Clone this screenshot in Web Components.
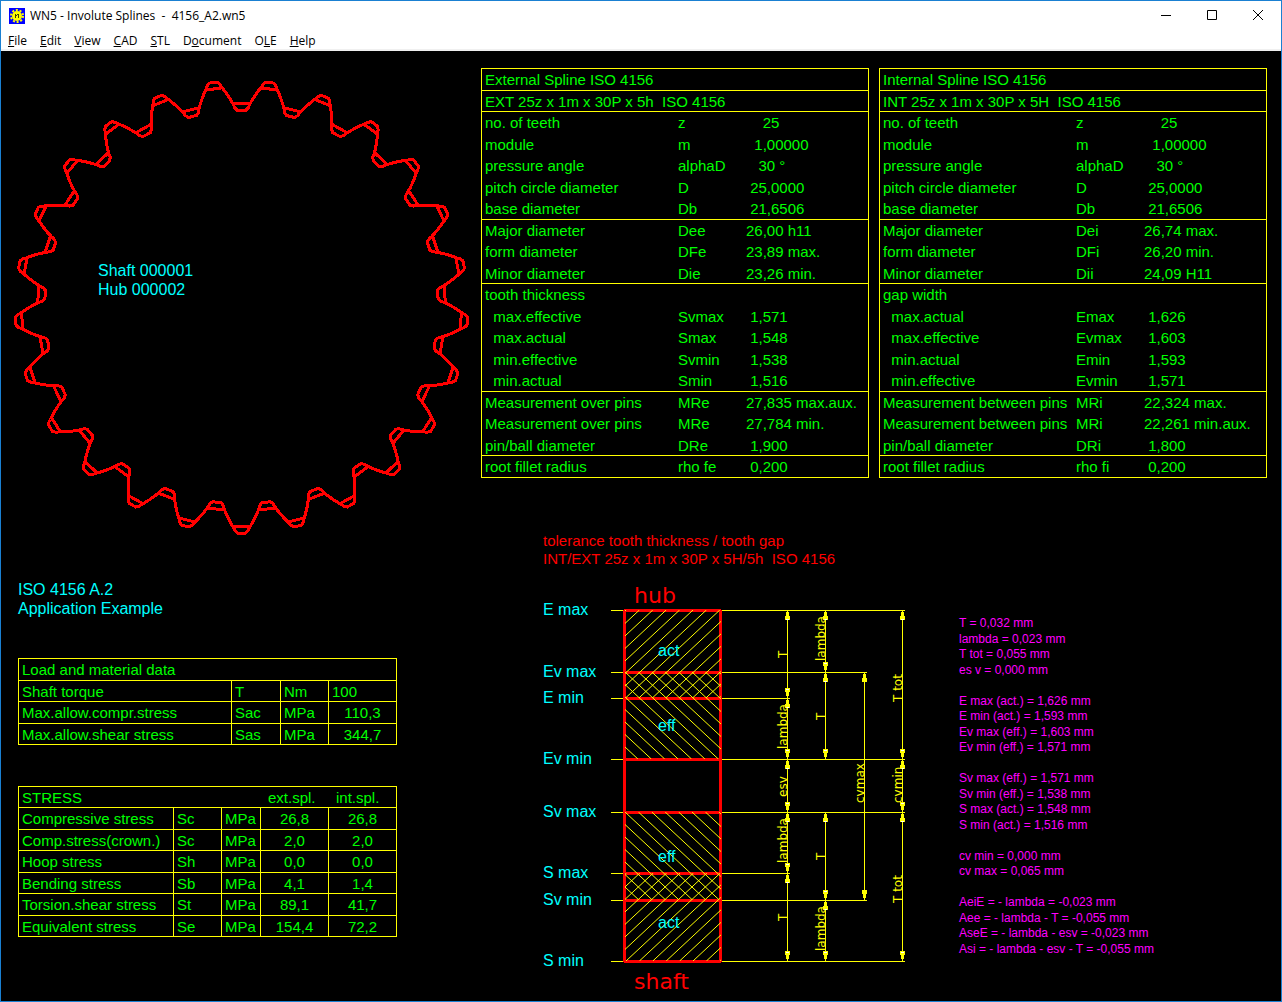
<!DOCTYPE html>
<html lang="en">
<head>
<meta charset="utf-8">
<title>WN5 - Involute Splines - 4156_A2.wn5</title>
<meta name="viewport" content="width=device-width, initial-scale=1">
<style>
  body {
    margin: 0;
    background: #000000;
    font-family: "Liberation Sans", Arial, sans-serif;
  }
</style>
</head>
<body>
<app-window>
  <title-bar slot="title">WN5 - Involute Splines&nbsp; -&nbsp; 4156_A2.wn5</title-bar>
  <menu-bar slot="menu">
    <menu-item><u>F</u>ile</menu-item>
    <menu-item><u>E</u>dit</menu-item>
    <menu-item><u>V</u>iew</menu-item>
    <menu-item><u>C</u>AD</menu-item>
    <menu-item><u>S</u>TL</menu-item>
    <menu-item>D<u>o</u>cument</menu-item>
    <menu-item>O<u>L</u>E</menu-item>
    <menu-item><u>H</u>elp</menu-item>
  </menu-bar>
  <spline-drawing slot="left">Shaft 000001<br>Hub 000002</spline-drawing>
  <part-note slot="left">ISO 4156 A.2<br>Application Example</part-note>
  <load-table slot="left"></load-table>
  <stress-table slot="left"></stress-table>
  <spline-table slot="tables" side="ext"></spline-table>
  <spline-table slot="tables" side="int"></spline-table>
  <tolerance-diagram slot="tolerance">
    <span slot="line1">tolerance tooth thickness / tooth gap</span>
    <span slot="line2">INT/EXT 25z x 1m x 30P x 5H/5h&nbsp; ISO 4156</span>
  </tolerance-diagram>
  <value-list slot="tolerance"></value-list>
</app-window>

<script>
class AppWindow extends HTMLElement {
  connectedCallback() {
    this.attachShadow({ mode: 'open' });
    this.shadowRoot.innerHTML = `
      <style>
        :host {
          display: flex;
          flex-direction: column;
          box-sizing: border-box;
          min-height: 100vh;
          border: 1px solid #1a80d2;
          background: #000000;
        }
        main {
          flex: 1;
          display: grid;
          grid-template-columns: 480px minmax(0, 1fr);
        }
        .left {
          display: flex;
          flex-direction: column;
        }
        .right {
          padding: 17px 14px 0 0;
        }
        .tables {
          display: grid;
          grid-template-columns: 1fr 1fr;
          gap: 10px;
        }
        .tolerance {
          display: flex;
          align-items: flex-start;
          gap: 44px;
          padding: 54px 0 0 62px;
        }
      </style>
      <slot name="title"></slot>
      <slot name="menu"></slot>
      <main>
        <div class="left"><slot name="left"></slot></div>
        <div class="right">
          <div class="tables"><slot name="tables"></slot></div>
          <div class="tolerance"><slot name="tolerance"></slot></div>
        </div>
      </main>
    `;
  }
}
customElements.define('app-window', AppWindow);

class TitleBar extends HTMLElement {
  connectedCallback() {
    this.attachShadow({ mode: 'open' });
    this.shadowRoot.innerHTML = `
      <style>
        :host {
          display: flex;
          align-items: center;
          height: 30px;
          padding-left: 8px;
          background: #ffffff;
          color: #000000;
          font: 12px/16px "Open Sans", "Noto Sans", sans-serif;
        }
        h1 {
          flex: 1;
          margin: 0 0 0 5px;
          font: inherit;
        }
        button {
          align-self: flex-start;
          width: 46px;
          height: 28px;
          padding: 0;
          border: 0;
          background: none;
        }
        button:hover { background: #e5e5e5; }
        button svg { display: block; margin: 0 auto; }
      </style>
      <svg width="16" height="16" viewBox="0 0 16 16" aria-hidden="true">
        <rect width="16" height="16" fill="#0000ff"/>
        <circle cx="8" cy="8" r="6" fill="none" stroke="#ffff00" stroke-width="2" stroke-dasharray="2 1.77"/>
        <circle cx="8" cy="8" r="5" fill="#ffff00"/>
        <path d="M6 6h1v4h-1zM7 7h1v1h-1zM8 6h2v1h-2zM9 7h1v3h-1z" fill="#404000"/>
      </svg>
      <h1><slot></slot></h1>
      <button aria-label="Minimize"><svg width="10" height="10"><path d="M0 5.5h10" stroke="#000"/></svg></button>
      <button aria-label="Maximize"><svg width="10" height="10"><path d="M.5 .5h9v9h-9z" fill="none" stroke="#000"/></svg></button>
      <button aria-label="Close"><svg width="10" height="10"><path d="M0 0l10 10M10 0L0 10" stroke="#000"/></svg></button>
    `;
  }
}
customElements.define('title-bar', TitleBar);

class MenuBar extends HTMLElement {
  connectedCallback() {
    this.attachShadow({ mode: 'open' });
    this.shadowRoot.innerHTML = `
      <style>
        :host {
          display: block;
          background: #ffffff;
          border-bottom: 2px solid #f0f0f0;
        }
        nav {
          display: flex;
          gap: 1px;
          height: 18px;
          padding-left: 1px;
        }
      </style>
      <nav><slot></slot></nav>
    `;
  }
}
customElements.define('menu-bar', MenuBar);

class MenuItem extends HTMLElement {
  connectedCallback() {
    this.attachShadow({ mode: 'open' });
    this.shadowRoot.innerHTML = `
      <style>
        :host { display: block; }
        button {
          height: 18px;
          padding: 0 6px;
          border: 0;
          background: none;
          color: #000000;
          font: 12px/18px "Open Sans", "Noto Sans", sans-serif;
        }
        button:hover { background: #cce8ff; }
      </style>
      <button><slot></slot></button>
    `;
  }
}
customElements.define('menu-item', MenuItem);

// Profile of the external and internal spline, 25 teeth, 30 degrees
const SPLINE = { z: 25, pitch: 25, base: 21.6506, px: 16.92, cx: 240.5, cy: 256 };

function splinePath(tipD, formTip, formRoot, rootD) {
  const { z, pitch, base, px, cx, cy } = SPLINE;
  const inv = d => {
    const a = Math.acos(base / d);
    return Math.tan(a) - a;
  };
  const half = d => Math.PI / 2 / z + inv(pitch) - inv(d);
  // half a tooth as [diameter, angle from the tooth centre]
  const side = [];
  if (tipD > formTip) {
    side.push([tipD, half(formTip) * 0.5], [(tipD + formTip) / 2, half(formTip) * 0.85]);
  }
  for (let i = 0; i <= 6; i++) {
    const d = formTip + (formRoot - formTip) * i / 6;
    side.push([d, half(d)]);
  }
  if (rootD < formRoot) {
    const gap = Math.PI / z - half(formRoot);
    side.push([(rootD + formRoot) / 2, Math.PI / z - gap * 0.88], [rootD, Math.PI / z - gap * 0.55]);
  }
  const pts = [];
  for (let k = 0; k < z; k++) {
    const mid = Math.PI / 2 + k * 2 * Math.PI / z;
    const tooth = side.slice().reverse().map(([d, a]) => [d, -a]).concat(side);
    for (const [d, a] of tooth) {
      const r = d / 2 * px;
      pts.push((cx + r * Math.cos(mid + a)).toFixed(1) + ' ' + (cy + r * Math.sin(mid + a)).toFixed(1));
    }
  }
  return 'M' + pts.join('L') + 'Z';
}

class SplineDrawing extends HTMLElement {
  connectedCallback() {
    this.attachShadow({ mode: 'open' });
    this.shadowRoot.innerHTML = `
      <style>
        :host {
          display: block;
          position: relative;
          height: 500px;
        }
        svg { display: block; }
        path {
          fill: none;
          stroke: #ff0000;
          stroke-width: 3;
          shape-rendering: crispEdges;
        }
        p {
          position: absolute;
          left: 97px;
          top: 210px;
          margin: 0;
          color: #00ffff;
          font-size: 16px;
          line-height: 19px;
        }
      </style>
      <svg width="480" height="500" viewBox="0 0 480 500" role="img" aria-label="Spline profile">
        <path d="${splinePath(26, 26, 23.89, 23.26)}"/>
        <path d="${splinePath(26.74, 26.2, 24.09, 24.09)}"/>
      </svg>
      <p><slot></slot></p>
    `;
  }
}
customElements.define('spline-drawing', SplineDrawing);

class PartNote extends HTMLElement {
  connectedCallback() {
    this.attachShadow({ mode: 'open' });
    this.shadowRoot.innerHTML = `
      <style>
        :host {
          display: block;
          margin: 29px 0 40px 17px;
          color: #00ffff;
          font-size: 16px;
          line-height: 19px;
        }
      </style>
      <slot></slot>
    `;
  }
}
customElements.define('part-note', PartNote);

const TABLE_STYLE = `
  table {
    width: 100%;
    table-layout: fixed;
    border-collapse: separate;
    border-spacing: 0;
    border: 1px solid #ffff00;
    border-top: 0;
    color: #00ff00;
    font-size: 15px;
    line-height: 18px;
  }
  th, td {
    box-sizing: border-box;
    height: 21px;
    padding: 2px 0 0 3px;
    border-top: 1px solid transparent;
    font-weight: normal;
    text-align: left;
    vertical-align: top;
    white-space: pre;
  }
`;

const GRID_STYLE = `
  :host {
    display: block;
    margin: 0 84px 41px 17px;
  }
  th, td { border-top-color: #ffff00; }
  td + td {
    border-left: 1px solid #ffff00;
  }
  .num { text-align: center; padding-left: 0; }
`;

class LoadTable extends HTMLElement {
  connectedCallback() {
    const rows = [
      ['Shaft torque', 'T', 'Nm', '100'],
      ['Max.allow.compr.stress', 'Sac', 'MPa', '110,3'],
      ['Max.allow.shear stress', 'Sas', 'MPa', '344,7']
    ];
    this.attachShadow({ mode: 'open' });
    this.shadowRoot.innerHTML = `
      <style>
        ${TABLE_STYLE}
        ${GRID_STYLE}
        tr:nth-child(odd) > * { height: 22px; }
      </style>
      <table>
        <colgroup><col><col style="width:49px"><col style="width:48px"><col style="width:68px"></colgroup>
        <tr><th colspan="4">Load and material data</th></tr>
        ${rows.map((r, i) => `<tr>${r.map((c, j) =>
          `<td${j === 3 && i > 0 ? ' class="num"' : ''}>${c}</td>`).join('')}</tr>`).join('')}
      </table>
    `;
  }
}
customElements.define('load-table', LoadTable);

class StressTable extends HTMLElement {
  connectedCallback() {
    const rows = [
      ['Compressive stress', 'Sc', 'MPa', '26,8', '26,8'],
      ['Comp.stress(crown.)', 'Sc', 'MPa', '2,0', '2,0'],
      ['Hoop stress', 'Sh', 'MPa', '0,0', '0,0'],
      ['Bending stress', 'Sb', 'MPa', '4,1', '1,4'],
      ['Torsion.shear stress', 'St', 'MPa', '89,1', '41,7'],
      ['Equivalent stress', 'Se', 'MPa', '154,4', '72,2']
    ];
    this.attachShadow({ mode: 'open' });
    this.shadowRoot.innerHTML = `
      <style>
        ${TABLE_STYLE}
        ${GRID_STYLE}
        tr:nth-child(even) > * { height: 22px; }
        .spl { padding-left: 8px; }
      </style>
      <table>
        <colgroup><col><col style="width:48px"><col style="width:39px"><col style="width:68px"><col style="width:68px"></colgroup>
        <tr><th colspan="3">STRESS</th><th class="spl">ext.spl.</th><th class="spl">int.spl.</th></tr>
        ${rows.map(r => `<tr>${r.map((c, j) =>
          `<td${j > 2 ? ' class="num"' : ''}>${c}</td>`).join('')}</tr>`).join('')}
      </table>
    `;
  }
}
customElements.define('stress-table', StressTable);

// leading blanks shift a value, '-' opens a new ruled block
const SPLINE_DATA = {
  ext: {
    title: 'External Spline ISO 4156',
    name: 'EXT 25z x 1m x 30P x 5h  ISO 4156',
    rows: [
      ['-', 'no. of teeth', 'z', '    25'],
      ['', 'module', 'm', '  1,00000'],
      ['', 'pressure angle', 'alphaD', '   30 °'],
      ['', 'pitch circle diameter', 'D', ' 25,0000'],
      ['', 'base diameter', 'Db', ' 21,6506'],
      ['-', 'Major diameter', 'Dee', '26,00 h11'],
      ['', 'form diameter', 'DFe', '23,89 max.'],
      ['', 'Minor diameter', 'Die', '23,26 min.'],
      ['-', 'tooth thickness', '', ''],
      ['', '  max.effective', 'Svmax', ' 1,571'],
      ['', '  max.actual', 'Smax', ' 1,548'],
      ['', '  min.effective', 'Svmin', ' 1,538'],
      ['', '  min.actual', 'Smin', ' 1,516'],
      ['-', 'Measurement over pins', 'MRe', '27,835 max.aux.'],
      ['', 'Measurement over pins', 'MRe', '27,784 min.'],
      ['', 'pin/ball diameter', 'DRe', ' 1,900'],
      ['-', 'root fillet radius', 'rho fe', ' 0,200']
    ]
  },
  int: {
    title: 'Internal Spline ISO 4156',
    name: 'INT 25z x 1m x 30P x 5H  ISO 4156',
    rows: [
      ['-', 'no. of teeth', 'z', '    25'],
      ['', 'module', 'm', '  1,00000'],
      ['', 'pressure angle', 'alphaD', '   30 °'],
      ['', 'pitch circle diameter', 'D', ' 25,0000'],
      ['', 'base diameter', 'Db', ' 21,6506'],
      ['-', 'Major diameter', 'Dei', '26,74 max.'],
      ['', 'form diameter', 'DFi', '26,20 min.'],
      ['', 'Minor diameter', 'Dii', '24,09 H11'],
      ['-', 'gap width', '', ''],
      ['', '  max.actual', 'Emax', ' 1,626'],
      ['', '  max.effective', 'Evmax', ' 1,603'],
      ['', '  min.actual', 'Emin', ' 1,593'],
      ['', '  min.effective', 'Evmin', ' 1,571'],
      ['-', 'Measurement between pins', 'MRi', '22,324 max.'],
      ['', 'Measurement between pins', 'MRi', '22,261 min.aux.'],
      ['', 'pin/ball diameter', 'DRi', ' 1,800'],
      ['-', 'root fillet radius', 'rho fi', ' 0,200']
    ]
  }
};

class SplineTable extends HTMLElement {
  connectedCallback() {
    const data = SPLINE_DATA[this.getAttribute('side')];
    this.attachShadow({ mode: 'open' });
    this.shadowRoot.innerHTML = `
      <style>
        :host { display: block; }
        ${TABLE_STYLE}
        tr:nth-child(odd) > * { height: 22px; }
        .rule > * { border-top-color: #ffff00; }
      </style>
      <table>
        <colgroup><col style="width:193px"><col style="width:68px"><col></colgroup>
        <tr class="rule"><th colspan="3">${data.title}</th></tr>
        <tr class="rule"><th colspan="3">${data.name}</th></tr>
        ${data.rows.map(([rule, label, sym, val]) => `<tr${rule ? ' class="rule"' : ''}>` +
          `<td>${label}</td><td>${sym}</td><td>${val}</td></tr>`).join('')}
      </table>
    `;
  }
}
customElements.define('spline-table', SplineTable);

// [label, y, right end of the level line]
const LEVELS = [
  ['E max', 40, 362], ['Ev max', 102, 324], ['E min', 128, 247], ['Ev min', 189, 362],
  ['Sv max', 242, 362], ['S max', 303, 247], ['Sv min', 330, 324], ['S min', 391, 362]
];

// [label, x of the line, from, to, start of the label]
const DIMS = [
  ['T', 244, 40, 128, 88], ['lambda', 244, 128, 189, 179], ['esv', 244, 189, 242, 227],
  ['lambda', 244, 242, 303, 293], ['T', 244, 303, 391, 351],
  ['lambda', 282, 40, 102, 91], ['T', 282, 102, 189, 150], ['T', 282, 242, 330, 290],
  ['lambda', 282, 330, 391, 381],
  ['cvmax', 321, 102, 330, 233],
  ['T tot', 359, 40, 189, 132], ['cvmin', 359, 189, 242, 233], ['T tot', 359, 242, 391, 333]
];

class ToleranceDiagram extends HTMLElement {
  hatch(id, top, bottom, x, y, dir) {
    let d = '';
    for (let k = -20; k <= 20; k++) {
      const at = yy => (x + k * 13.4 + dir * (yy - y) * 13.4 / 12.5).toFixed(1);
      d += `M${at(top)} ${top}L${at(bottom)} ${bottom}`;
    }
    return `<clipPath id="${id}"><rect x="82" y="${top}" width="96" height="${bottom - top}"/></clipPath>
      <path class="hatch" clip-path="url(#${id})" d="${d}"/>`;
  }

  dim([label, x, from, to, start]) {
    const arrow = (y, s) => `<path class="arrow" d="M${x - 1} ${y + s * 2}h3l1 ${s * 8}h-5z"/>` +
      (x === 321 ? '' : `<rect class="dot" x="${x - 1}" y="${s > 0 ? y + 9 : y - 9}" width="3" height="1"/>`);
    return `<path class="thin" d="M${x + 0.5} ${from}V${to}"/>${arrow(from, 1)}${arrow(to, -1)}
      <text class="dimtext" transform="translate(${x} ${start}) rotate(-90)">${label}</text>`;
  }

  connectedCallback() {
    this.attachShadow({ mode: 'open' });
    this.shadowRoot.innerHTML = `
      <style>
        :host { display: block; }
        h2 {
          margin: 0 0 2px;
          color: #ff0000;
          font-size: 15px;
          font-weight: normal;
          line-height: 18px;
        }
        svg { display: block; font-size: 16px; }
        path, rect { shape-rendering: crispEdges; }
        .thin { fill: none; stroke: #ffff00; }
        .hatch { fill: none; stroke: #ffff00; shape-rendering: auto; }
        .arrow { fill: #ffff00; }
        .dot { fill: #ffffff; }
        .bar { fill: none; stroke: #ff0000; stroke-width: 3; }
        .level { fill: #00ffff; }
        .dimtext { fill: #ffff00; font: 12px "DejaVu Sans", Verdana, sans-serif; }
        .name { fill: #ff0000; font: 22px "DejaVu Sans", Verdana, sans-serif; }
      </style>
      <h2><slot name="line1"></slot><br><slot name="line2"></slot></h2>
      <svg width="372" height="424" viewBox="0 0 372 424" role="img" aria-label="Tolerance of tooth thickness and gap">
        ${LEVELS.map(([name, y, end]) => `
          <text class="level" x="0" y="${y + 5}">${name}</text>
          <path class="thin" d="M68 ${y + 0.5}H${end}"/>
          <path class="bar" d="M81 ${y + 0.5}H178"/>`).join('')}
        <path class="bar" d="M81.5 40V392M177.5 40V392"/>
        ${this.hatch('gap-act', 40, 128, 83, 40, -1)}
        ${this.hatch('gap-eff', 102, 189, 82, 102, 1)}
        ${this.hatch('tooth-eff', 242, 330, 82, 242, 1)}
        ${this.hatch('tooth-act', 303, 391, 83, 391, -1)}
        ${DIMS.map(d => this.dim(d)).join('')}
        <text class="level" x="115" y="86">act</text>
        <text class="level" x="115" y="161">eff</text>
        <text class="level" x="115" y="292">eff</text>
        <text class="level" x="115" y="358">act</text>
        <text class="name" x="91" y="33">hub</text>
        <text class="name" x="91" y="419">shaft</text>
      </svg>
    `;
  }
}
customElements.define('tolerance-diagram', ToleranceDiagram);

class ValueList extends HTMLElement {
  connectedCallback() {
    const lines = [
      'T = 0,032 mm', 'lambda = 0,023 mm', 'T tot = 0,055 mm', 'es v = 0,000 mm', '',
      'E max (act.) = 1,626 mm', 'E min (act.) = 1,593 mm', 'Ev max (eff.) = 1,603 mm', 'Ev min (eff.) = 1,571 mm', '',
      'Sv max (eff.) = 1,571 mm', 'Sv min (eff.) = 1,538 mm', 'S max (act.) = 1,548 mm', 'S min (act.) = 1,516 mm', '',
      'cv min = 0,000 mm', 'cv max = 0,065 mm', '',
      'AeiE = - lambda = -0,023 mm', 'Aee = - lambda - T = -0,055 mm',
      'AseE = - lambda - esv = -0,023 mm', 'Asi = - lambda - esv - T = -0,055 mm'
    ];
    this.attachShadow({ mode: 'open' });
    this.shadowRoot.innerHTML = `
      <style>
        :host {
          display: block;
          padding-top: 84px;
        }
        ul {
          margin: 0;
          padding: 0;
          list-style: none;
          color: #ff00ff;
          font-size: 12px;
          line-height: 15px;
        }
        li { height: 15px; white-space: nowrap; }
        li:nth-child(odd) { height: 16px; }
      </style>
      <ul>${lines.map(l => `<li>${l}</li>`).join('')}</ul>
    `;
  }
}
customElements.define('value-list', ValueList);
</script>
</body>
</html>
